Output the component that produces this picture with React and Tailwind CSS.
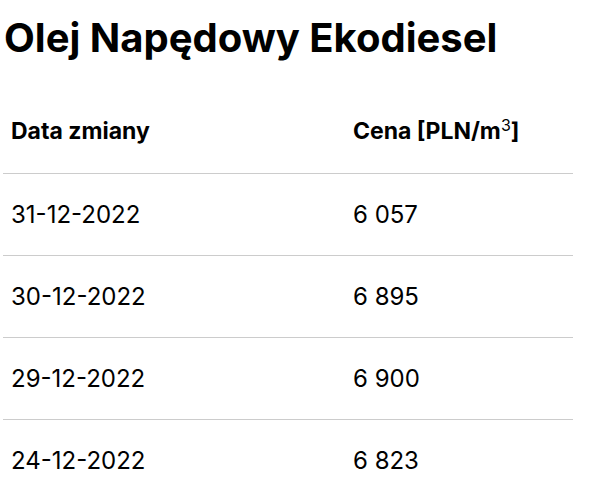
import React from 'react';

const rows = [
    { date: '31-12-2022', price: '6 057' },
    { date: '30-12-2022', price: '6 895' },
    { date: '29-12-2022', price: '6 900' },
    { date: '24-12-2022', price: '6 823' },
];

const App = () => {
    return (
        <div className="bg-white min-h-[499px] text-black font-['Inter',sans-serif] pl-[3px] pr-[18px]">
            <h1 className="text-[40px] font-bold leading-[40px] pt-[18px] pl-[1px]">Olej Napędowy Ekodiesel</h1>
            <table className="w-[570px] mt-[32px] border-collapse text-[24px]">
                <thead>
                    <tr className="h-[83px] border-b border-[#cccccc] text-[23px]">
                        <th className="text-left font-bold pl-[8px] w-[350px]">Data zmiany</th>
                        <th className="text-left font-bold">
                            Cena [PLN/m<sup className="text-[16px] font-normal">3</sup>]
                        </th>
                    </tr>
                </thead>
                <tbody>
                    {rows.map((r) => (
                        <tr key={r.date} className="h-[82px] border-b border-[#cccccc] last:border-b-0">
                            <td className="pl-[8px] pt-[2px]">{r.date}</td>
                            <td className="pt-[2px]">{r.price}</td>
                        </tr>
                    ))}
                </tbody>
            </table>
        </div>
    );
};

export default App;
